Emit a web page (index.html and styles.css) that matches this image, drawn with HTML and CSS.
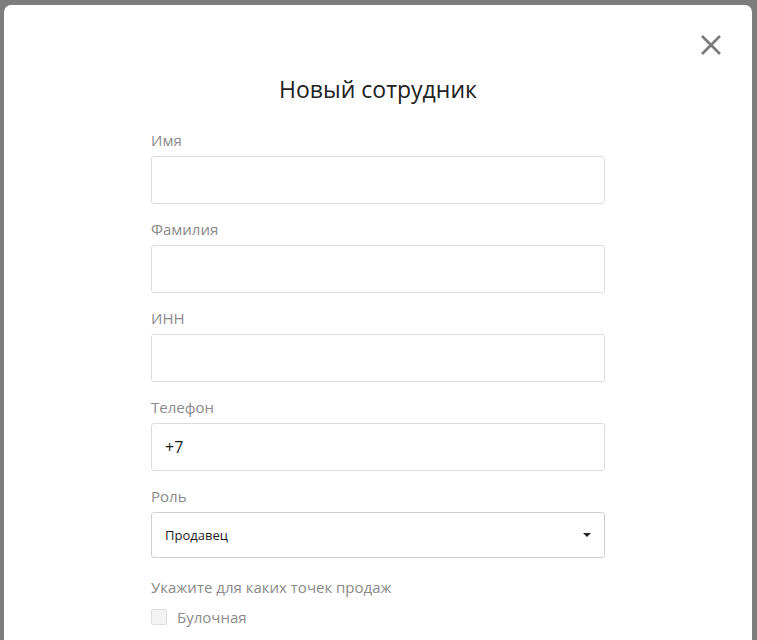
FILE: index.html
```html
<!DOCTYPE html>
<html lang="ru">
<head>
<meta charset="utf-8">
<link rel="stylesheet" href="styles.css">
</head>
<body>
<div class="modal">
  <button class="close" aria-label="Закрыть">
    <svg width="22" height="22" viewBox="0 0 22 22"><path d="M2 2L20 20M20 2L2 20" stroke="#7a7a7a" stroke-width="2.6" stroke-linecap="butt"/></svg>
  </button>
  <h1 class="title">Новый сотрудник</h1>
  <form class="form">
    <div class="field">
      <label class="label">Имя</label>
      <input class="input" type="text">
    </div>
    <div class="field">
      <label class="label">Фамилия</label>
      <input class="input" type="text">
    </div>
    <div class="field">
      <label class="label">ИНН</label>
      <input class="input" type="text">
    </div>
    <div class="field">
      <label class="label">Телефон</label>
      <input class="input" type="text" value="+7">
    </div>
    <div class="field">
      <label class="label">Роль</label>
      <div class="select">
        <span class="select-text">Продавец</span>
        <span class="caret"></span>
      </div>
    </div>
    <div class="field">
      <label class="label">Укажите для каких точек продаж</label>
      <div class="check-row">
        <span class="checkbox"></span>
        <span class="check-label">Булочная</span>
      </div>
    </div>
  </form>
</div>
</body>
</html>
```
FILE: styles.css
```css
html, body {
  margin: 0;
  padding: 0;
  height: 100%;
  overflow: hidden;
}
body {
  background: #7d7d7d;
  font-family: "Open Sans", "Noto Sans", sans-serif;
}
.modal {
  position: relative;
  margin: 5px 5px 0 4px;
  height: 700px;
  background: #fff;
  border-radius: 7px;
  padding-top: 69px;
  box-sizing: border-box;
}
.close {
  position: absolute;
  top: 29px;
  right: 30px;
  width: 22px;
  height: 22px;
  padding: 0;
  border: 0;
  background: none;
  cursor: pointer;
}
.close svg { display: block; }
.title {
  margin: 0 0 26px;
  text-align: center;
  font-size: 23px;
  line-height: 30px;
  font-weight: 500;
  color: #222;
}
.form {
  width: 454px;
  margin: 0 auto;
}
.field {
  margin-bottom: 15px;
}
.label {
  display: block;
  font-size: 15px;
  line-height: 20px;
  color: #8a8a8a;
  margin-bottom: 6px;
}
.input {
  display: block;
  box-sizing: border-box;
  width: 100%;
  height: 48px;
  border: 1px solid #dcdcdc;
  border-radius: 3px;
  padding: 0 13px;
  font-family: inherit;
  font-size: 16px;
  color: #1e1e1e;
  outline: none;
}
.select {
  box-sizing: border-box;
  height: 46px;
  border: 1px solid #cfcfcf;
  border-radius: 3px;
  display: flex;
  align-items: center;
  justify-content: space-between;
  padding: 0 13px 0 13px;
  margin-bottom: 19px;
}
.select-text {
  font-size: 13px;
  color: #1e1e1e;
}
.caret {
  width: 0;
  height: 0;
  border-left: 4px solid transparent;
  border-right: 4px solid transparent;
  border-top: 4px solid #222;
}
.check-row {
  display: flex;
  align-items: center;
  margin-top: 10px;
}
.checkbox {
  width: 14px;
  height: 14px;
  border: 1px solid #dedede;
  background: #f3f3f3;
  border-radius: 2px;
  margin-right: 10px;
}
.check-label {
  font-size: 15px;
  line-height: 20px;
  color: #8a8a8a;
}
```
